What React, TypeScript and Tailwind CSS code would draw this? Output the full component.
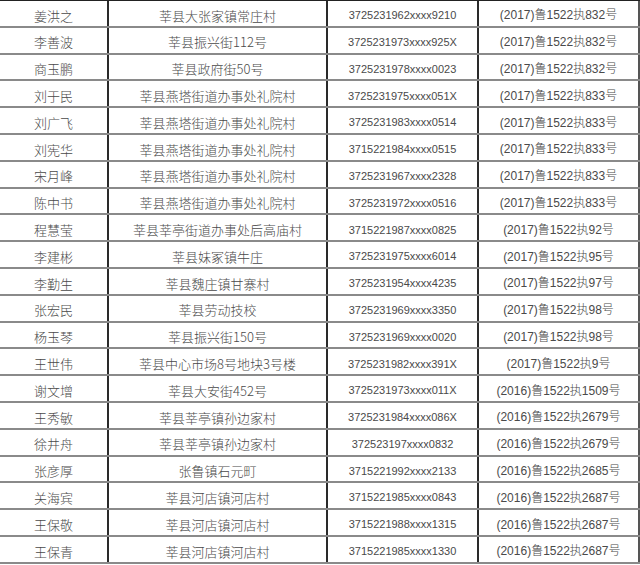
import React from "react";

const rows: [string, string, string, string][] = [
  ["姜洪之", "莘县大张家镇常庄村", "3725231962xxxx9210", "(2017)鲁1522执832号"],
  ["李善波", "莘县振兴街112号", "3725231973xxxx925X", "(2017)鲁1522执832号"],
  ["商玉鹏", "莘县政府街50号", "3725231978xxxx0023", "(2017)鲁1522执832号"],
  ["刘于民", "莘县燕塔街道办事处礼院村", "3725231975xxxx051X", "(2017)鲁1522执833号"],
  ["刘广飞", "莘县燕塔街道办事处礼院村", "3725231983xxxx0514", "(2017)鲁1522执833号"],
  ["刘宪华", "莘县燕塔街道办事处礼院村", "3715221984xxxx0515", "(2017)鲁1522执833号"],
  ["宋月峰", "莘县燕塔街道办事处礼院村", "3725231967xxxx2328", "(2017)鲁1522执833号"],
  ["陈中书", "莘县燕塔街道办事处礼院村", "3725231972xxxx0516", "(2017)鲁1522执833号"],
  ["程慧莹", "莘县莘亭街道办事处后高庙村", "3715221987xxxx0825", "(2017)鲁1522执92号"],
  ["李建彬", "莘县妹冢镇牛庄", "3725231975xxxx6014", "(2017)鲁1522执95号"],
  ["李勤生", "莘县魏庄镇甘寨村", "3725231954xxxx4235", "(2017)鲁1522执97号"],
  ["张宏民", "莘县劳动技校", "3725231969xxxx3350", "(2017)鲁1522执98号"],
  ["杨玉琴", "莘县振兴街150号", "3725231969xxxx0020", "(2017)鲁1522执98号"],
  ["王世伟", "莘县中心市场8号地块3号楼", "3725231982xxxx391X", "(2017)鲁1522执9号"],
  ["谢文增", "莘县大安街452号", "3725231973xxxx011X", "(2016)鲁1522执1509号"],
  ["王秀敏", "莘县莘亭镇孙边家村", "3725231984xxxx086X", "(2016)鲁1522执2679号"],
  ["徐井舟", "莘县莘亭镇孙边家村", "372523197xxxx0832", "(2016)鲁1522执2679号"],
  ["张彦厚", "张鲁镇石元町", "3715221992xxxx2133", "(2016)鲁1522执2685号"],
  ["关海宾", "莘县河店镇河店村", "3715221985xxxx0843", "(2016)鲁1522执2687号"],
  ["王保敬", "莘县河店镇河店村", "3715221988xxxx1315", "(2016)鲁1522执2687号"],
  ["王保青", "莘县河店镇河店村", "3715221985xxxx1330", "(2016)鲁1522执2687号"],
];

export default function App() {
  return (
    <div className="w-[640px] h-[565px] bg-white overflow-hidden text-[#4a4a4a] font-light">
      <div className="border-t border-[#222]">
        {rows.map((r, i) => (
          <div key={i} className="flex h-[26.8px] border-b-2 border-[#8a8a8a]">
            <div className="w-[109px] shrink-0 border-r-2 border-[#2a2a2a] flex items-center justify-center pt-[4px] text-[13px] font-['Noto_Sans_CJK_SC',sans-serif]">
              {r[0]}
            </div>
            <div className="w-[219px] shrink-0 border-r-2 border-[#2a2a2a] flex items-center justify-center pt-[4px] text-[13px] font-['Noto_Sans_CJK_SC',sans-serif]">
              {r[1]}
            </div>
            <div className="w-[151px] shrink-0 border-r-2 border-[#2a2a2a] flex items-center justify-center pt-[4px] text-[11px] font-['Liberation_Sans','Noto_Sans_CJK_SC',sans-serif]">
              {r[2]}
            </div>
            <div className="flex-1 border-r-2 border-[#555] flex items-center justify-center pt-[4px] text-[12px] font-['Liberation_Sans','Noto_Sans_CJK_SC',sans-serif]">
              {r[3]}
            </div>
          </div>
        ))}
      </div>
    </div>
  );
}
